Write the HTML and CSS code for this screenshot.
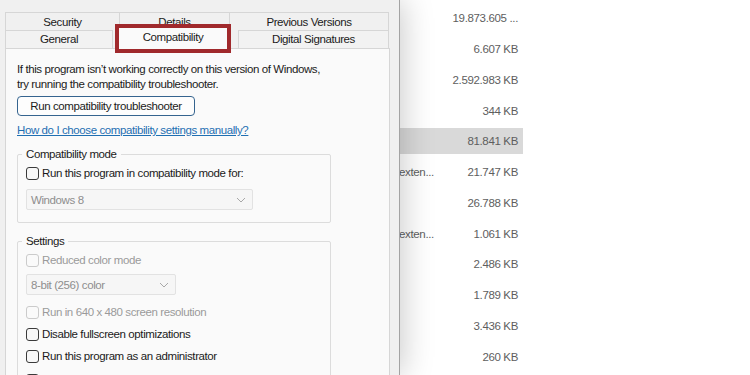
FILE: index.html
```html
<!DOCTYPE html>
<html>
<head>
<meta charset="utf-8">
<link rel="stylesheet" href="styles.css">
</head>
<body>
<div class="explorer">
  <div class="row"><span class="type"></span><span class="size">19.873.605 ...</span></div>
  <div class="row"><span class="type"></span><span class="size">6.607 KB</span></div>
  <div class="row"><span class="type"></span><span class="size">2.592.983 KB</span></div>
  <div class="row"><span class="type"></span><span class="size">344 KB</span></div>
  <div class="row selected"><span class="type"></span><span class="size">81.841 KB</span></div>
  <div class="row"><span class="type">exten...</span><span class="size">21.747 KB</span></div>
  <div class="row"><span class="type"></span><span class="size">26.788 KB</span></div>
  <div class="row"><span class="type">exten...</span><span class="size">1.061 KB</span></div>
  <div class="row"><span class="type"></span><span class="size">2.486 KB</span></div>
  <div class="row"><span class="type"></span><span class="size">1.789 KB</span></div>
  <div class="row"><span class="type"></span><span class="size">3.436 KB</span></div>
  <div class="row"><span class="type"></span><span class="size">260 KB</span></div>
</div>

<div class="dialog">
  <div class="tabs">
    <div class="tabrow back">
      <div class="tab t-security">Security</div>
      <div class="tab t-details">Details</div>
      <div class="tab t-prev">Previous Versions</div>
    </div>
    <div class="tabrow front">
      <div class="tab t-general">General</div>
      <div class="tab t-compat">Compatibility</div>
      <div class="tab t-digital">Digital Signatures</div>
    </div>
  </div>
  <div class="panel">
    <p class="intro">If this program isn’t working correctly on this version of Windows,<br>try running the compatibility troubleshooter.</p>
    <button class="btn">Run compatibility troubleshooter</button>
    <a class="link" href="#">How do I choose compatibility settings manually?</a>

    <fieldset class="group g-mode">
      <legend>Compatibility mode</legend>
      <label class="check first"><span class="box"></span>Run this program in compatibility mode for:</label>
      <div class="select wide disabled"><span>Windows 8</span><svg class="chev" width="10" height="6" viewBox="0 0 10 6"><path d="M1 1 L5 5 L9 1" fill="none" stroke="#a8a8a8" stroke-width="1"/></svg></div>
    </fieldset>

    <fieldset class="group g-settings">
      <legend>Settings</legend>
      <label class="check first disabled"><span class="box"></span>Reduced color mode</label>
      <div class="select narrow disabled"><span>8-bit (256) color</span><svg class="chev" width="10" height="6" viewBox="0 0 10 6"><path d="M1 1 L5 5 L9 1" fill="none" stroke="#a8a8a8" stroke-width="1"/></svg></div>
      <label class="check after-select disabled"><span class="box"></span>Run in 640 x 480 screen resolution</label>
      <label class="check"><span class="box"></span>Disable fullscreen optimizations</label>
      <label class="check"><span class="box"></span>Run this program as an administrator</label>
      <label class="check last"><span class="box"></span>Register this program for restart</label>
    </fieldset>
  </div>
</div>
</body>
</html>
```

FILE: styles.css
```css
* { box-sizing: border-box; }

html, body {
  margin: 0;
  padding: 0;
  width: 750px;
  height: 375px;
  overflow: hidden;
  background: #ffffff;
  font-family: "Liberation Sans", Arial, sans-serif;
  font-size: 11.5px;
  letter-spacing: -0.4px;
  color: #1b1b1b;
}

/* ---------- explorer behind the dialog ---------- */
.explorer {
  display: flex;
  flex-direction: column;
  gap: 4.76px;
  padding-top: 5.3px;
  width: 523px;
}

.row {
  display: grid;
  grid-template-columns: 399px 50px 1fr;
  align-items: center;
  height: 26px;
  color: #5e5e5e;
  font-size: 11.5px;
  letter-spacing: -0.35px;
}

.row.selected { background: #d9d9d9; }

.type {
  grid-column: 2;
  white-space: nowrap;
}

.size {
  grid-column: 3;
  text-align: right;
  padding-right: 5px;
}

/* ---------- dialog window ---------- */
.dialog {
  position: absolute;
  left: 0;
  top: 0;
  width: 400px;
  height: 375px;
  background: #f0f0f0;
  border-right: 1px solid #a3a3a3;
  box-shadow: 2px 0 30px rgba(0, 0, 0, 0.22);
  overflow: hidden;
}

.tabs {
  padding-top: 12px;
}

.tabrow {
  display: flex;
  height: 18px;
  padding-left: 5px;
}

.tab {
  height: 18px;
  line-height: 16px;
  text-align: center;
  border: 1px solid #d6d6d6;
  background: #f0f0f0;
  white-space: nowrap;
}

.back .tab { border-bottom: none; line-height: 18px; }
.t-security { width: 115px; }
.t-details { width: 110px; border-left: none; }
.t-prev { width: 159px; border-left: none; }

.front .tab { background: #f2f2f2; border-bottom: none; }
.t-general { width: 108px; }
.t-compat {
  position: relative;
  z-index: 2;
  margin-left: 6px;
  margin-top: -2px;
  width: 108px;
  height: 21px;
  line-height: 19px;
  background: #fafafa !important;
  border: none;
  outline: 4px solid #a0292c;
}
.t-digital { width: 151px; margin-left: 11px; }

.panel {
  position: relative;
  margin-left: 5px;
  width: 385px;
  height: 330px;
  background: #fafafa;
  border: 1px solid #d6d6d6;
  padding: 13px 0 0 11px;
}

.intro {
  margin: 0;
  line-height: 15px;
}

.btn {
  display: block;
  margin-top: 4px;
  width: 178px;
  height: 20px;
  padding: 0;
  font: inherit;
  letter-spacing: inherit;
  color: #1b1b1b;
  background: #fdfdfd;
  border: 1px solid #35648f;
  border-radius: 4px;
}

.link {
  display: block;
  margin-top: 7px;
  line-height: 15px;
  color: #1f6fb2;
  text-decoration: underline;
  width: max-content;
}

.group {
  margin: 9px 0 0 0;
  width: 314px;
  border: 1px solid #dcdcdc;
  border-radius: 2px;
  padding: 0 0 12px 8px;
}

.group legend {
  padding: 0 4px;
  margin-left: -4px;
  line-height: 15px;
}

.g-settings { margin-top: 11px; padding-bottom: 20px; }

.check {
  display: flex;
  align-items: center;
  gap: 3px;
  line-height: 15px;
  margin-top: 7px;
  white-space: nowrap;
}

.check.first { margin-top: 4px; }
.check.after-select { margin-top: 10px; }
.check.last { margin-top: 9px; }

.box {
  width: 13px;
  height: 13px;
  border: 1px solid #3a3a3a;
  border-radius: 3px;
  background: #f7f7f7;
  flex: none;
}

.check.disabled { color: #9a9a9a; }
.check.disabled .box { border-color: #cbcbcb; background: #fafafa; }

.select {
  display: flex;
  align-items: center;
  justify-content: space-between;
  margin-top: 8px;
  height: 21px;
  padding: 0 6px 0 4px;
  border: 1px solid #e2e2e2;
  border-radius: 2px;
  background: #f6f6f6;
  color: #8e8e8e;
}

.select.wide { width: 227px; }
.select.narrow { width: 150px; margin-top: 6px; }

.chev { flex: none; }
```
